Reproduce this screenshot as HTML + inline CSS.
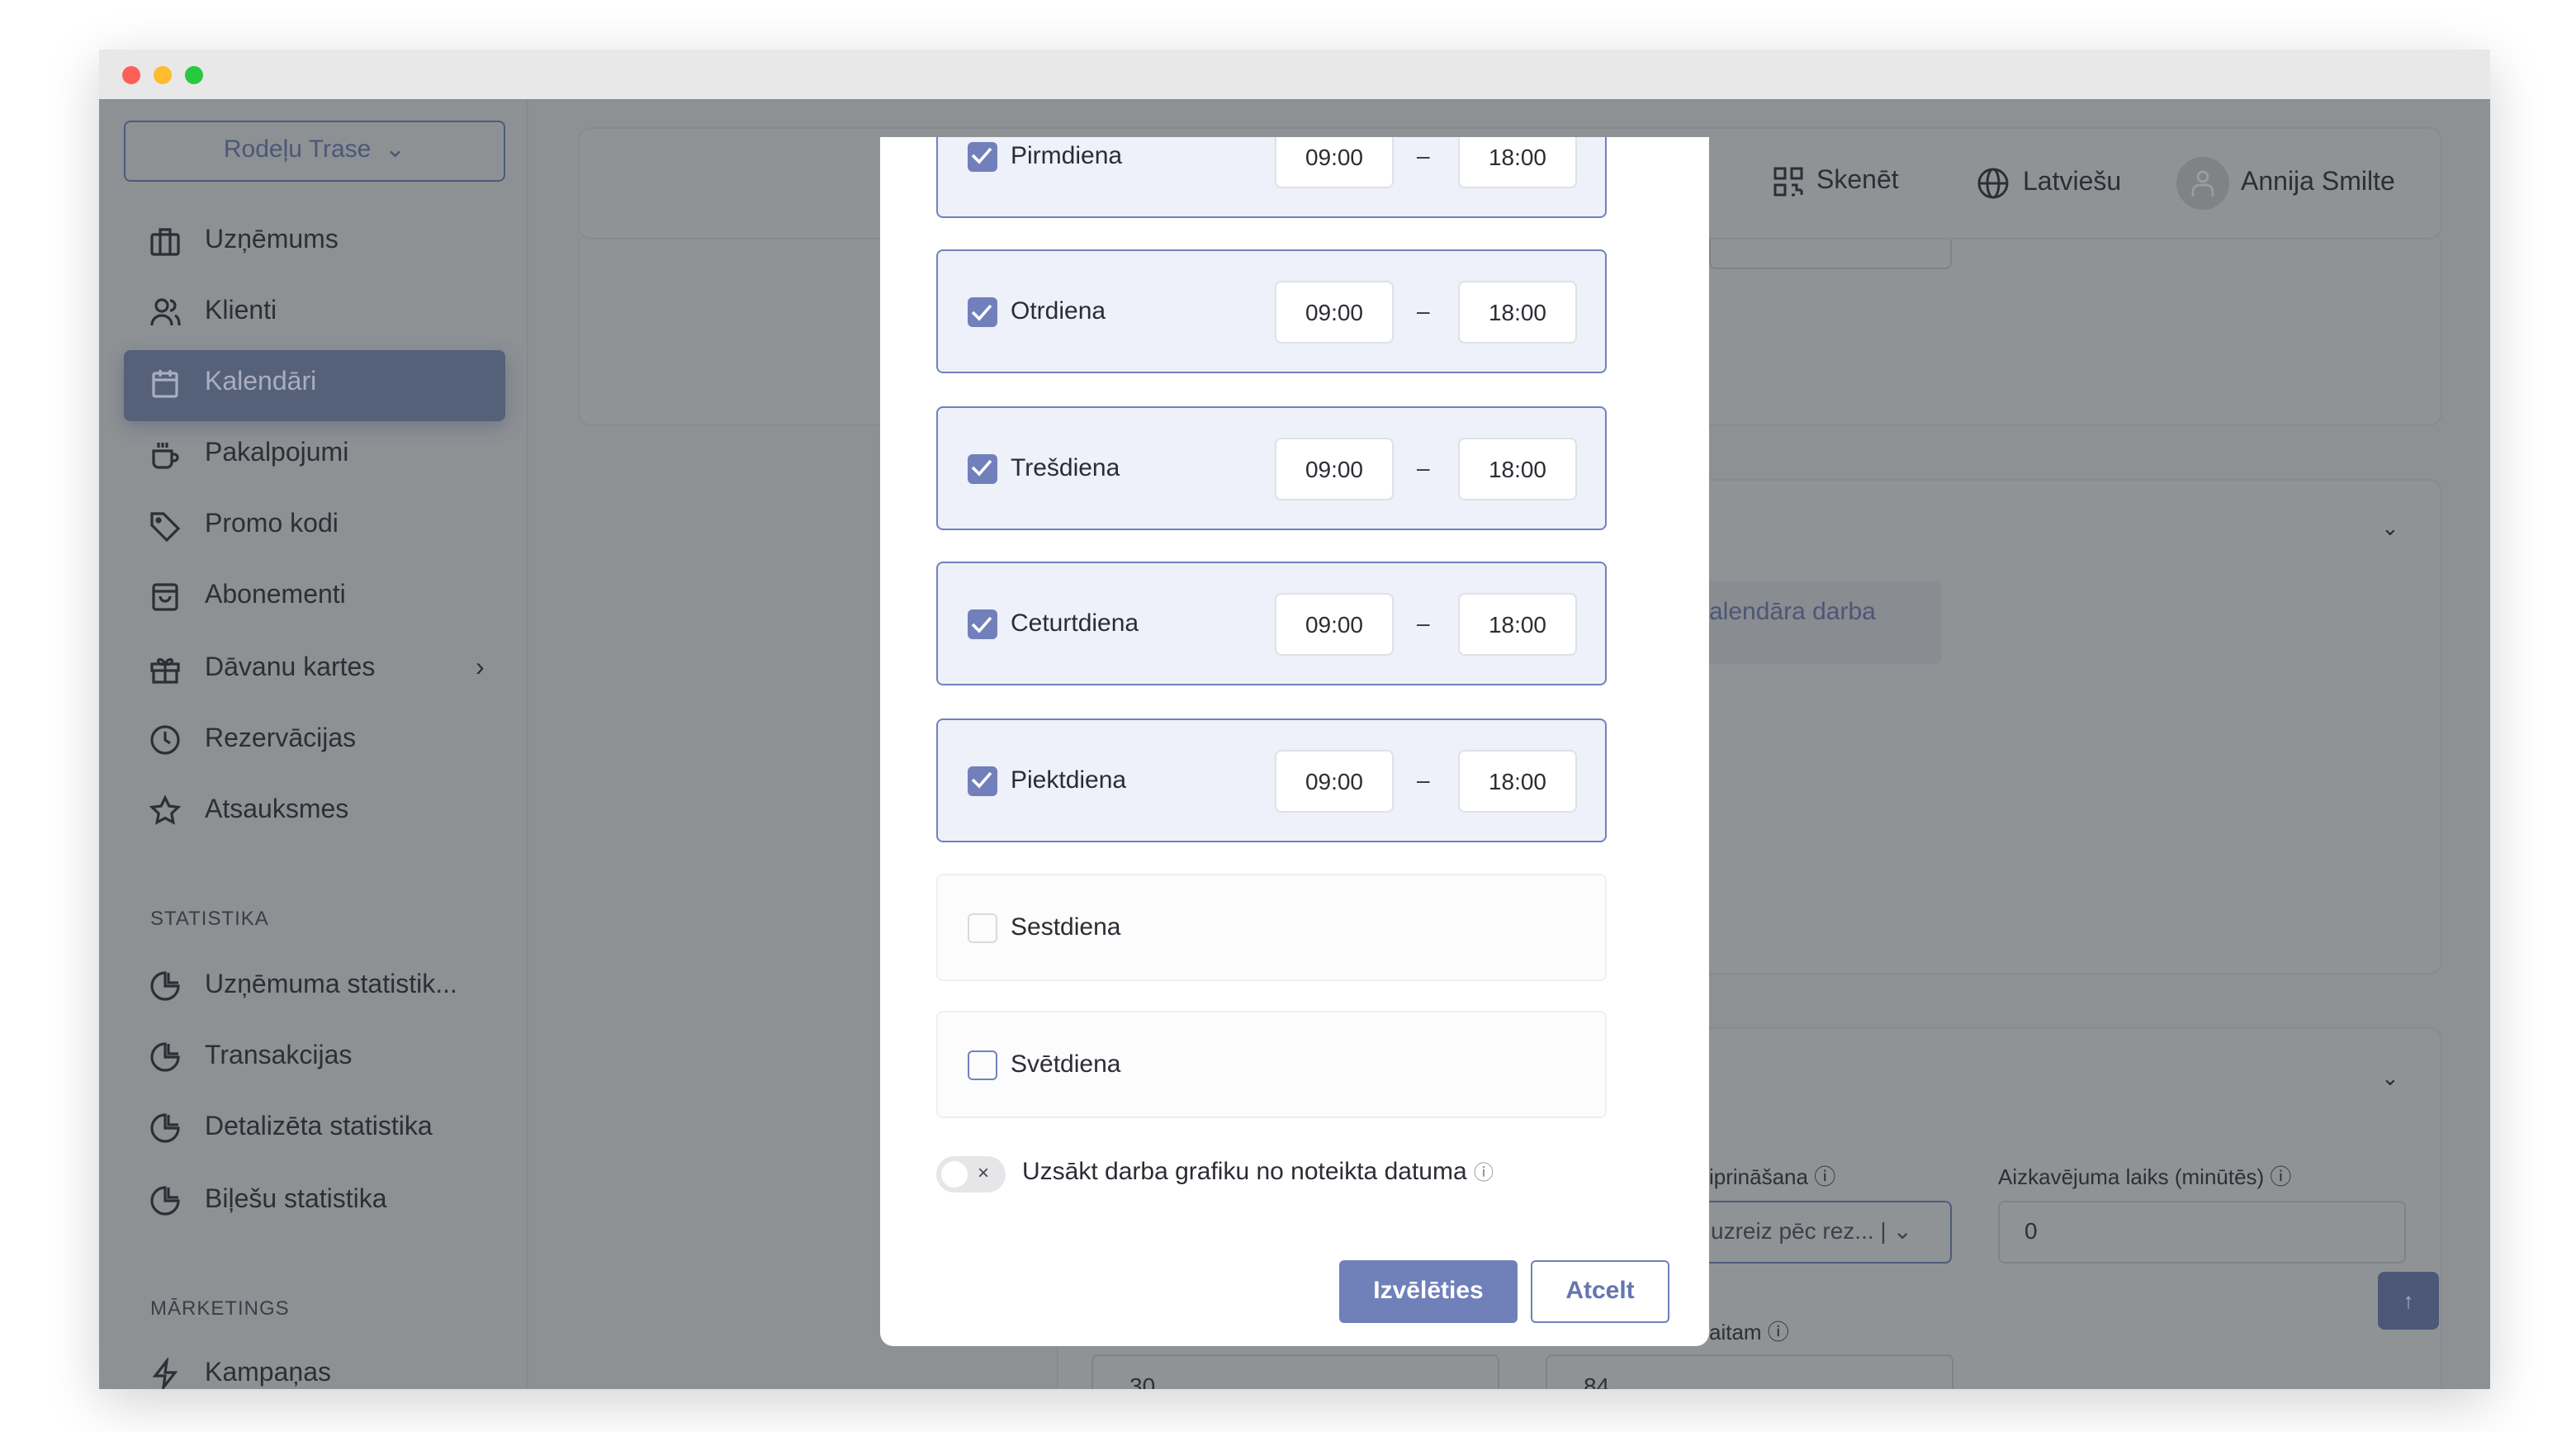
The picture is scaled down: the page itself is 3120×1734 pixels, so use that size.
<!DOCTYPE html>
<html><head><meta charset="utf-8"><style>
*{box-sizing:border-box;margin:0;padding:0}
html,body{width:3120px;height:1734px;overflow:hidden;background:#fff}
#s{width:1560px;height:867px;transform:scale(2);transform-origin:0 0;position:relative;font-family:"Liberation Sans",sans-serif}
.abs{position:absolute}
.win{left:60px;top:30px;width:1448px;height:811px;overflow:hidden;box-shadow:0 8px 30px rgba(0,0,0,.18)}
.tb{left:0;top:0;width:1448px;height:30px;background:#e8e8e8}
.dot{top:10px;width:11px;height:11px;border-radius:50%}
.main{left:0;top:30px;width:1448px;height:781px;background:#8e9194}
.side{left:0;top:0;width:260px;height:781px;background:#8d9194;border-right:1px solid #868a8e}
.nav{left:30px;font-size:16px;color:#2c2f34;display:flex;align-items:center;gap:14px}
.nav svg{width:20px;height:20px;fill:none;stroke:#2c2f34;stroke-width:1.6}
.card{background:#909396;border:1px solid #878b8f;border-radius:8px}
.modal{left:533px;top:83px;width:502px;height:732px;background:#fff;border-radius:0 0 8px 8px;overflow:hidden}
.row{left:34px;width:406px;border-radius:4px}
.on{background:#eef0fa;border:1px solid #7181bd;height:75px}
.off{background:#fcfcfd;border:1px solid #eeeff2;height:65px}
.cb{position:absolute;left:18px;width:18px;height:18px;border-radius:3px}
.cbon{background:#7180bb}
.lbl{position:absolute;left:44px;font-size:15px;color:#2b2d33}
.ti{position:absolute;width:72px;height:38px;background:#fff;border:1px solid #dfe1e6;border-radius:4px;font-size:14px;color:#2b2d33;text-align:center;line-height:36px}
.dash{position:absolute;left:290px;font-size:14px;color:#333}
.hd{font-size:16px;color:#2c2f34;display:flex;align-items:center;gap:8px}
</style></head><body><div id="s">
<div class="abs win">
 <div class="abs tb"><div class="abs dot" style="left:14px;background:#fe5f57"></div><div class="abs dot" style="left:33px;background:#febc2e"></div><div class="abs dot" style="left:52px;background:#28c840"></div></div>
 <div class="abs main">
  <div class="abs side">
   <div class="abs" style="left:15px;top:13px;width:231px;height:37px;border:1.5px solid #4e5a7c;border-radius:4px;text-align:center;line-height:34px;color:#4c5777;font-size:15px">Rodeļu Trase &nbsp;⌄</div>
   <div class="abs nav" style="top:76px"><svg viewBox="0 0 20 20"><rect x="2" y="6" width="16" height="12" rx="1"/><path d="M7 6V3h6v3M7 6v12M13 6v12"/></svg>Uzņēmums</div>
   <div class="abs nav" style="top:119px"><svg viewBox="0 0 20 20"><circle cx="8" cy="6" r="3.5"/><path d="M2 18c0-4 3-6 6-6s6 2 6 6M13 3a3 3 0 010 6M16 12c2 1 2.5 3 2.5 6"/></svg>Klienti</div>
   <div class="abs" style="left:15px;top:152px;width:231px;height:43px;background:#556079;border-radius:4px;box-shadow:0 3px 10px rgba(60,70,110,.35)"></div>
   <div class="abs nav" style="top:162px;color:#a9aec0"><svg viewBox="0 0 20 20" style="stroke:#a9aec0"><rect x="3" y="4" width="14" height="14" rx="1"/><path d="M3 8h14M7 2v4M13 2v4"/></svg>Kalendāri</div>
   <div class="abs nav" style="top:205px"><svg viewBox="0 0 20 20"><path d="M3 8h11v7a3 3 0 01-3 3H6a3 3 0 01-3-3zM14 10h1.5a2 2 0 010 4H14M6 3v3M8.5 3v3M11 3v3"/></svg>Pakalpojumi</div>
   <div class="abs nav" style="top:248px"><svg viewBox="0 0 20 20"><path d="M2 3h7l9 9-7 7-9-9z"/><circle cx="6" cy="7" r="1"/></svg>Promo kodi</div>
   <div class="abs nav" style="top:291px"><svg viewBox="0 0 20 20"><rect x="3" y="3" width="14" height="15" rx="1.5"/><path d="M3 7h14M7 10a3 3 0 006 0"/></svg>Abonementi</div>
   <div class="abs nav" style="top:335px"><svg viewBox="0 0 20 20"><rect x="2" y="7" width="16" height="4"/><path d="M3 11v7h14v-7M10 7v11M10 7C8 3 5 4 6 6s4 1 4 1 3 1 4-1-2-3-4 1"/></svg>Dāvanu kartes<span style="position:absolute;left:198px">›</span></div>
   <div class="abs nav" style="top:378px"><svg viewBox="0 0 20 20"><circle cx="10" cy="10" r="8"/><path d="M10 5v5l3 2"/></svg>Rezervācijas</div>
   <div class="abs nav" style="top:421px"><svg viewBox="0 0 20 20"><path d="M10 2l2.4 5 5.5.7-4 3.8 1 5.4-4.9-2.6-4.9 2.6 1-5.4-4-3.8 5.5-.7z"/></svg>Atsauksmes</div>
   <div class="abs" style="left:31px;top:489px;font-size:12px;color:#3b3e44;letter-spacing:.5px">STATISTIKA</div>
   <div class="abs nav" style="top:527px"><svg viewBox="0 0 20 20"><path d="M10 2a8 8 0 108 8h-8z"/><path d="M12 2v6h6"/></svg>Uzņēmuma statistik...</div>
   <div class="abs nav" style="top:570px"><svg viewBox="0 0 20 20"><path d="M10 2a8 8 0 108 8h-8z"/><path d="M12 2v6h6"/></svg>Transakcijas</div>
   <div class="abs nav" style="top:613px"><svg viewBox="0 0 20 20"><path d="M10 2a8 8 0 108 8h-8z"/><path d="M12 2v6h6"/></svg>Detalizēta statistika</div>
   <div class="abs nav" style="top:657px"><svg viewBox="0 0 20 20"><path d="M10 2a8 8 0 108 8h-8z"/><path d="M12 2v6h6"/></svg>Biļešu statistika</div>
   <div class="abs" style="left:31px;top:725px;font-size:12px;color:#3b3e44;letter-spacing:.5px">MĀRKETINGS</div>
   <div class="abs nav" style="top:762px"><svg viewBox="0 0 20 20"><path d="M11 2L4 11h6l-1 7 7-9h-6z"/></svg>Kampaņas</div>
  </div>
  <div class="abs card" style="left:290px;top:85px;width:1129px;height:113px;border-top:none;border-radius:0 0 8px 8px"></div>
  <div class="abs" style="left:975px;top:85px;width:147px;height:18px;border:1px solid #7f8388;border-top:none;border-radius:0 0 4px 4px"></div>
  <div class="abs card" style="left:290px;top:17px;width:1129px;height:68px"></div>
  <div class="abs hd" style="left:1014px;top:41px"><svg width="18" height="18" viewBox="0 0 18 18" fill="none" stroke="#2c2f34" stroke-width="1.5"><rect x="1" y="1" width="6" height="6"/><rect x="11" y="1" width="6" height="6"/><rect x="1" y="11" width="6" height="6"/><path d="M11 11h3v3h3M11 17h2M17 14v3"/></svg>Skenēt</div>
  <div class="abs hd" style="left:1137px;top:41px"><svg width="20" height="20" viewBox="0 0 20 20" fill="none" stroke="#2c2f34" stroke-width="1.5"><circle cx="10" cy="10" r="8.5"/><ellipse cx="10" cy="10" rx="3.5" ry="8.5"/><path d="M1.5 10h17"/></svg>Latviešu</div>
  <div class="abs" style="left:1258px;top:35px;width:32px;height:32px;border-radius:50%;background:#7f8386"></div>
  <svg class="abs" style="left:1264px;top:41px" width="20" height="20" viewBox="0 0 20 20" fill="none" stroke="#9a9da1" stroke-width="1.4"><circle cx="10" cy="6" r="3"/><path d="M4 18v-3a4 4 0 014-4h4a4 4 0 014 4v3"/></svg>
  <div class="abs hd" style="left:1297px;top:42px">Annija Smilte</div>
  <div class="abs card" style="left:580px;top:230px;width:839px;height:300px"></div>
  <div class="abs" style="left:1382px;top:252px;color:#2c2f34;font-size:13px">⌄</div>
  <div class="abs" style="left:960px;top:292px;width:156px;height:50px;background:#898c90;border-radius:4px;color:#4c5777;font-size:15px;padding:10px 0 0 15px">alendāra darba</div>
  <div class="abs card" style="left:580px;top:562px;width:839px;height:250px"></div>
  <div class="abs" style="left:1382px;top:585px;color:#2c2f34;font-size:13px">⌄</div>
  <div class="abs" style="left:975px;top:642px;font-size:13px;color:#2c2f34">iprināšana ⓘ</div>
  <div class="abs" style="left:1150px;top:642px;font-size:13px;color:#2c2f34">Aizkavējuma laiks (minūtēs) ⓘ</div>
  <div class="abs" style="left:960px;top:667px;width:162px;height:38px;border:1.5px solid #4e5a7c;border-radius:4px;font-size:14px;color:#3c4048;padding:9px 0 0 15px">uzreiz pēc rez... | ⌄</div>
  <div class="abs" style="left:1150px;top:667px;width:247px;height:38px;border:1px solid #7f8388;border-radius:4px;font-size:14px;color:#2c2f34;padding:9px 0 0 15px">0</div>
  <div class="abs" style="left:1380px;top:710px;width:37px;height:35px;background:#4d5777;border-radius:4px;color:#a9aec0;text-align:center;line-height:35px;font-size:13px">↑</div>
  <div class="abs" style="left:975px;top:736px;font-size:13px;color:#2c2f34">aitam ⓘ</div>
  <div class="abs" style="left:601px;top:760px;width:247px;height:40px;border:1px solid #7f8388;border-radius:4px;font-size:14px;color:#2c2f34;padding:10px 0 0 22px">30</div>
  <div class="abs" style="left:876px;top:760px;width:247px;height:40px;border:1px solid #7f8388;border-radius:4px;font-size:14px;color:#2c2f34;padding:10px 0 0 22px">84</div>
 </div>
</div>
<div class="abs modal">
 <div class="abs row on" style="top:-26px"><div class="cb cbon" style="top:28px"></div><span class="lbl" style="top:28px">Pirmdiena</span><div class="ti" style="left:204px;top:18px">09:00</div><span class="dash" style="top:28px">–</span><div class="ti" style="left:315px;top:18px">18:00</div></div>
 <div class="abs row on" style="top:68px"><div class="cb cbon" style="top:28px"></div><span class="lbl" style="top:28px">Otrdiena</span><div class="ti" style="left:204px;top:18px">09:00</div><span class="dash" style="top:28px">–</span><div class="ti" style="left:315px;top:18px">18:00</div></div>
 <div class="abs row on" style="top:163px"><div class="cb cbon" style="top:28px"></div><span class="lbl" style="top:28px">Trešdiena</span><div class="ti" style="left:204px;top:18px">09:00</div><span class="dash" style="top:28px">–</span><div class="ti" style="left:315px;top:18px">18:00</div></div>
 <div class="abs row on" style="top:257px"><div class="cb cbon" style="top:28px"></div><span class="lbl" style="top:28px">Ceturtdiena</span><div class="ti" style="left:204px;top:18px">09:00</div><span class="dash" style="top:28px">–</span><div class="ti" style="left:315px;top:18px">18:00</div></div>
 <div class="abs row on" style="top:352px"><div class="cb cbon" style="top:28px"></div><span class="lbl" style="top:28px">Piektdiena</span><div class="ti" style="left:204px;top:18px">09:00</div><span class="dash" style="top:28px">–</span><div class="ti" style="left:315px;top:18px">18:00</div></div>
 <div class="abs row off" style="top:446px"><div class="cb" style="top:23px;border:1px solid #d8dae0"></div><span class="lbl" style="top:23px">Sestdiena</span></div>
 <div class="abs row off" style="top:529px"><div class="cb" style="top:23px;border:1.5px solid #7181bd"></div><span class="lbl" style="top:23px">Svētdiena</span></div>
 <div class="abs" style="left:34px;top:617px;width:42px;height:22px;border-radius:11px;background:#e6e6e8"><div class="abs" style="left:3px;top:3px;width:16px;height:16px;border-radius:50%;background:#fff"></div><span class="abs" style="left:25px;top:3px;font-size:12px;color:#444">×</span></div>
 <div class="abs" style="left:86px;top:618px;font-size:15px;color:#2b2d33">Uzsākt darba grafiku no noteikta datuma <span style="font-size:12px;color:#888">ⓘ</span></div>
 <div class="abs" style="left:278px;top:680px;width:108px;height:38px;background:#7080b9;border-radius:3px;color:#fff;font-size:15px;font-weight:bold;text-align:center;line-height:38px">Izvēlēties</div>
 <div class="abs" style="left:394px;top:680px;width:84px;height:38px;border:1px solid #7080b9;border-radius:3px;color:#6575b0;font-size:15px;font-weight:bold;text-align:center;line-height:36px">Atcelt</div>
</div>
<svg class="abs" style="left:0;top:0" width="1560" height="867"><g fill="none" stroke="#fff" stroke-width="1.8"><path d="M589 94l4 4 7-8M589 189l4 4 7-8M589 283l4 4 7-8M589 378l4 4 7-8M589 472l4 4 7-8"/></g></svg>
</div></body></html>
